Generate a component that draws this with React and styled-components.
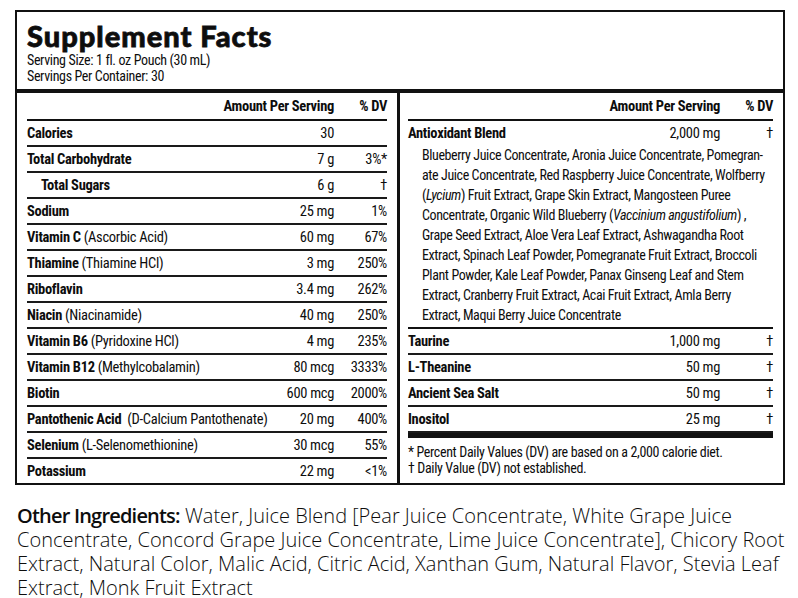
import styled, { createGlobalStyle } from "styled-components"

const GlobalStyle = createGlobalStyle`
    body {
        margin: 0;
        background: #fff;
        color: #0d0d0d;
    }
`

const Page = styled.div`
    padding: 10px 13px 0 15px;
    font-family: "Roboto Condensed", "Liberation Sans Narrow", "Liberation Sans", sans-serif;
`

const Panel = styled.div`
    width: 766px;
    border: 2px solid #111;
`

const Header = styled.div`
    padding: 8px 10px 5px;
    border-bottom: 4px solid #111;
`

const Title = styled.h1`
    margin: 0;
    font-family: Lato, "DejaVu Sans", sans-serif;
    font-weight: 900;
    font-size: 29px;
    line-height: 32px;
    letter-spacing: 1px;
    -webkit-text-stroke: 0.8px #111;
`

const Serving = styled.p`
    margin: 0;
    font-size: 14px;
    line-height: 16px;
    letter-spacing: -0.35px;
`

const Columns = styled.div`
    display: grid;
    grid-template-columns: 383px minmax(0, 1fr);
`

const Column = styled.div`
    min-width: 0;
    padding: ${(props) => props.$right ? '0 10px 0 8px' : '0 10px'};
    border-right: ${(props) => props.$right ? 'none' : '3px solid #111'};
`

const Row = styled.div`
    display: grid;
    grid-template-columns: minmax(0, 1fr) auto 53px;
    align-items: center;
    height: ${(props) => props.$head ? '26px' : '24px'};
    font-size: 14.5px;
    letter-spacing: -0.3px;
    white-space: nowrap;
    border-bottom: ${(props) => props.$rule || '2px solid #1a1a1a'};
    font-weight: ${(props) => props.$head ? 700 : 400};
    &:last-child {
        border-bottom: none;
    }
    b {
        font-weight: 700;
    }
    .label {
        padding-left: ${(props) => props.$indent ? '14px' : '0'};
    }
    .amount, .dv {
        text-align: right;
    }
`

const Blend = styled.div`
    padding: 0 0 2px 14px;
    font-size: 14px;
    line-height: 20px;
    letter-spacing: -0.4px;
    border-bottom: 2px solid #111;
    span {
        display: block;
        white-space: nowrap;
    }
`

const Notes = styled.div`
    border-top: 5px solid #111;
    padding: 6px 0 0;
    font-size: 14px;
    line-height: 16px;
    letter-spacing: -0.35px;
    white-space: nowrap;
`

const Other = styled.div`
    margin-top: 19px;
    padding-left: 2px;
    font-family: "Open Sans", "Noto Sans", sans-serif;
    font-weight: 300;
    font-size: 20px;
    line-height: 24px;
    span {
        display: block;
        white-space: nowrap;
    }
    b {
        font-weight: 600;
        letter-spacing: -0.8px;
    }
`

const leftRows = [
    ['Calories', '', '30', ''],
    ['Total Carbohydrate', '', '7 g', '3%*'],
    ['Total Sugars', '', '6 g', '†', true],
    ['Sodium', '', '25 mg', '1%'],
    ['Vitamin C', ' (Ascorbic Acid)', '60 mg', '67%'],
    ['Thiamine', ' (Thiamine HCl)', '3 mg', '250%'],
    ['Riboflavin', '', '3.4 mg', '262%'],
    ['Niacin', ' (Niacinamide)', '40 mg', '250%'],
    ['Vitamin B6', ' (Pyridoxine HCl)', '4 mg', '235%'],
    ['Vitamin B12', ' (Methylcobalamin)', '80 mcg', '3333%'],
    ['Biotin', '', '600 mcg', '2000%'],
    ['Pantothenic Acid', '\u00a0 (D-Calcium Pantothenate)', '20 mg', '400%'],
    ['Selenium', ' (L-Selenomethionine)', '30 mcg', '55%'],
    ['Potassium', '', '22 mg', '<1%'],
]

const rightRows = [
    ['Taurine', '1,000 mg'],
    ['L-Theanine', '50 mg'],
    ['Ancient Sea Salt', '50 mg'],
    ['Inositol', '25 mg'],
]

const HeadRow = () => (
    <Row $head $rule="2px solid #111">
        <span />
        <span className="amount">Amount Per Serving</span>
        <span className="dv">% DV</span>
    </Row>
)

const App = () => {
    return (
        <Page>
            <GlobalStyle />
            <Panel>
                <Header>
                    <Title>Supplement Facts</Title>
                    <Serving>Serving Size: 1 fl. oz Pouch (30 mL)</Serving>
                    <Serving>Servings Per Container: 30</Serving>
                </Header>
                <Columns>
                    <Column>
                        <HeadRow />
                        {leftRows.map(([name, extra, amount, dv, indent]) => (
                            <Row key={name} $indent={indent}>
                                <span className="label"><b>{name}</b>{extra}</span>
                                <span className="amount">{amount}</span>
                                <span className="dv">{dv}</span>
                            </Row>
                        ))}
                    </Column>
                    <Column $right>
                        <HeadRow />
                        <Row $rule="none">
                            <span className="label"><b>Antioxidant Blend</b></span>
                            <span className="amount">2,000 mg</span>
                            <span className="dv">†</span>
                        </Row>
                        <Blend>
                            <span>Blueberry Juice Concentrate, Aronia Juice Concentrate, Pomegran-</span>
                            <span>ate Juice Concentrate, Red Raspberry Juice Concentrate, Wolfberry</span>
                            <span>(<i>Lycium</i>) Fruit Extract, Grape Skin Extract, Mangosteen Puree</span>
                            <span>Concentrate, Organic Wild Blueberry (<i>Vaccinium angustifolium</i>) ,</span>
                            <span>Grape Seed Extract, Aloe Vera Leaf Extract, Ashwagandha Root</span>
                            <span>Extract, Spinach Leaf Powder, Pomegranate Fruit Extract, Broccoli</span>
                            <span>Plant Powder, Kale Leaf Powder, Panax Ginseng Leaf and Stem</span>
                            <span>Extract, Cranberry Fruit Extract, Acai Fruit Extract, Amla Berry</span>
                            <span>Extract, Maqui Berry Juice Concentrate</span>
                        </Blend>
                        {rightRows.map(([name, amount]) => (
                            <Row key={name}>
                                <span className="label"><b>{name}</b></span>
                                <span className="amount">{amount}</span>
                                <span className="dv">†</span>
                            </Row>
                        ))}
                        <Notes>
                            <div>* Percent Daily Values (DV) are based on a 2,000 calorie diet.</div>
                            <div>† Daily Value (DV) not established.</div>
                        </Notes>
                    </Column>
                </Columns>
            </Panel>
            <Other>
                <span><b>Other Ingredients:</b> Water, Juice Blend [Pear Juice Concentrate, White Grape Juice</span>
                <span>Concentrate, Concord Grape Juice Concentrate, Lime Juice Concentrate], Chicory Root</span>
                <span>Extract, Natural Color, Malic Acid, Citric Acid, Xanthan Gum, Natural Flavor, Stevia Leaf</span>
                <span>Extract, Monk Fruit Extract</span>
            </Other>
        </Page>
    )
}

export default App
